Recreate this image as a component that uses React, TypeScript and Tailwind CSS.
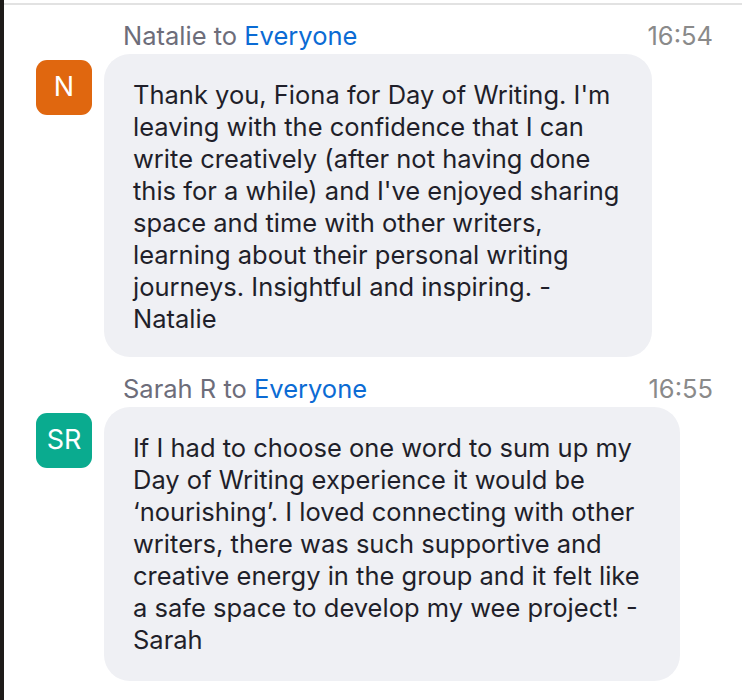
import React from 'react'

interface Message {
  initials: string
  avatarColor: string
  sender: string
  time: string
  lines: string[]
  bubbleWidth: string
  bubblePad: string
}

const messages: Message[] = [
  {
    initials: 'N',
    avatarColor: 'bg-[#e0670f]',
    sender: 'Natalie',
    time: '16:54',
    bubbleWidth: 'w-[548px]',
    bubblePad: 'pt-[25px] pb-[22px]',
    lines: [
      "Thank you, Fiona for Day of Writing. I'm",
      'leaving with the confidence that I can',
      'write creatively (after not having done',
      "this for a while) and I've enjoyed sharing",
      'space and time with other writers,',
      'learning about their personal writing',
      'journeys. Insightful and inspiring. -',
      'Natalie'
    ]
  },
  {
    initials: 'SR',
    avatarColor: 'bg-[#0aab8f]',
    sender: 'Sarah R',
    time: '16:55',
    bubbleWidth: 'w-[576px]',
    bubblePad: 'pt-[25px] pb-[25px]',
    lines: [
      'If I had to choose one word to sum up my',
      'Day of Writing experience it would be',
      '\u2018nourishing\u2019. I loved connecting with other',
      'writers, there was such supportive and',
      'creative energy in the group and it felt like',
      'a safe space to develop my wee project! -',
      'Sarah'
    ]
  }
]

function ChatMessage({ msg }: { msg: Message }) {
  return (
    <div className="flex flex-col">
      {/* header */}
      <div className="flex items-center justify-between pl-[119px] pr-[29px] h-[32px] text-[25.5px] leading-[32px]">
        <span className="text-[#6d6d7a]">
          {msg.sender} to <span className="text-[#0b6bd4]">Everyone</span>
        </span>
        <span className="text-[#8a8a8a]">{msg.time}</span>
      </div>

      {/* avatar + bubble */}
      <div className="flex items-start gap-[12px] pl-[32px] mt-[2px]">
        <div
          className={`${msg.avatarColor} w-[56px] h-[55px] mt-[6px] rounded-[11px] flex items-center justify-center text-white text-[27px] shrink-0`}
        >
          {msg.initials}
        </div>
        <div
          className={`${msg.bubbleWidth} ${msg.bubblePad} bg-[#eff0f4] rounded-[26px] pl-[29px] pr-[20px] text-[25.5px] leading-[32px] text-[#1f1f2a]`}
        >
          {msg.lines.map((line, i) => (
            <div key={i} className="whitespace-nowrap">
              {line}
            </div>
          ))}
        </div>
      </div>
    </div>
  )
}

export default function App() {
  return (
    <div
      className="flex w-[742px] h-[700px] bg-white overflow-hidden"
      style={{ fontFamily: 'Inter, "Noto Sans", sans-serif' }}
    >
      <div className="w-[4px] bg-[#1e1b19] shrink-0" />
      <div className="flex-1 border-t-2 border-[#e2e2e2] mt-[3px] pt-[15px] flex flex-col gap-[16px]">
        {messages.map((m) => (
          <ChatMessage key={m.time} msg={m} />
        ))}
      </div>
    </div>
  )
}
